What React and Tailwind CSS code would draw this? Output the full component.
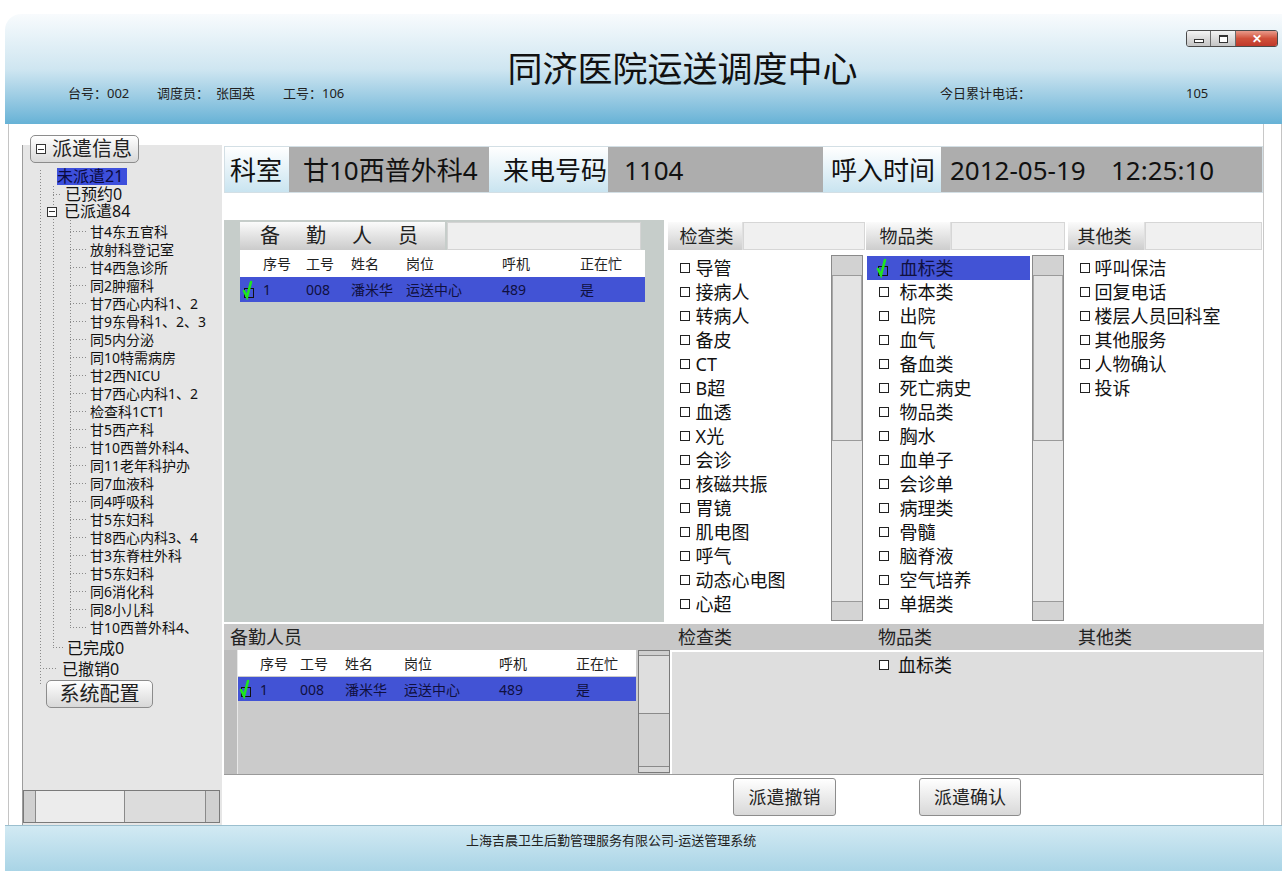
import React from "react";

const font = "font-['Noto_Sans','Noto_Sans_CJK_SC',sans-serif]";

const children = [
  "甘4东五官科", "放射科登记室", "甘4西急诊所", "同2肿瘤科", "甘7西心内科1、2", "甘9东骨科1、2、3",
  "同5内分泌", "同10特需病房", "甘2西NICU", "甘7西心内科1、2", "检查科1CT1", "甘5西产科",
  "甘10西普外科4、", "同11老年科护办", "同7血液科", "同4呼吸科", "甘5东妇科", "甘8西心内科3、4",
  "甘3东脊柱外科", "甘5东妇科", "同6消化科", "同8小儿科", "甘10西普外科4、",
];

const checks = ["导管", "接病人", "转病人", "备皮", "CT", "B超", "血透", "X光", "会诊", "核磁共振", "胃镜", "肌电图", "呼气", "动态心电图", "心超"];
const goods = ["血标类", "标本类", "出院", "血气", "备血类", "死亡病史", "物品类", "胸水", "血单子", "会诊单", "病理类", "骨髓", "脑脊液", "空气培养", "单据类"];
const others = ["呼叫保洁", "回复电话", "楼层人员回科室", "其他服务", "人物确认", "投诉"];

const cols = [
  { w: "w-[23px]" }, { w: "w-[43px]" }, { w: "w-[45px]" }, { w: "w-[55px]" }, { w: "w-[96px]" }, { w: "w-[78px]" },
];

function Box() {
  return <span className="inline-block w-[10px] h-[10px] border border-[#222] bg-white shrink-0" />;
}

function Ticked() {
  return (
    <svg width="16" height="20" viewBox="0 0 16 20" className="shrink-0">
      <rect x="2.5" y="8.5" width="9" height="9" fill="none" stroke="#111" />
      <path d="M2 11 L5 17 L9 2" stroke="#1ee61e" strokeWidth="2.6" fill="none" strokeLinecap="round" />
    </svg>
  );
}

function VScroll({ h, thumbTop, thumbH }) {
  return (
    <div className={`flex flex-col w-[32px] ${h} border border-[#8a8a8a] bg-[#e6e6e6] shrink-0`}>
      <div className={`${thumbTop} bg-[#d2d2d2] border-b border-[#9a9a9a]`} />
      <div className={`${thumbH} bg-[#e4e4e4] border-b border-[#9a9a9a] border-x border-x-[#a8a8a8]`} />
      <div className="flex-1" />
      <div className="h-[19px] bg-[#d4d4d4] border-t border-[#9a9a9a]" />
    </div>
  );
}

const head = ["序号", "工号", "姓名", "岗位", "呼机", "正在忙"];
const row = ["1", "008", "潘米华", "运送中心", "489", "是"];

function StaffTable({ gap }) {
  return (
    <div>
      <div className="flex items-center h-[27px] bg-white text-[14px] text-[#222]">
        <span className={`${gap} shrink-0`} />
        {head.map((t, i) => (
          <span key={i} className={`${cols[i + 1] ? cols[i + 1].w : ""} shrink-0`}>{t}</span>
        ))}
      </div>
      <div className="flex items-center h-[25px] bg-[#4253d5] text-[14px] text-[#101040]">
        <span className={`${gap} shrink-0 flex pl-[2px]`}><Ticked /></span>
        {row.map((t, i) => (
          <span key={i} className={`${cols[i + 1] ? cols[i + 1].w : ""} shrink-0`}>{t}</span>
        ))}
      </div>
    </div>
  );
}

function Btn({ children, cls }) {
  return (
    <div className={`flex items-center justify-center border border-[#8c8c8c] rounded-[3px] bg-linear-to-b from-white to-[#d8d8d8] text-[#222] ${cls}`}>
      {children}
    </div>
  );
}

function ColHead({ label, lw, iw, pl }) {
  return (
    <div className="flex h-[28px]">
      <div className={`${lw} ${pl} flex items-center bg-linear-to-b from-[#fbfbfb] to-[#cdcdcd] text-[18px] text-[#222] border-r border-[#e0e0e0] whitespace-nowrap`}>{label}</div>
      <div className={`${iw} bg-[#f0f0f0] border border-[#d6d6d6]`} />
    </div>
  );
}

export default function App() {
  return (
    <div className={`w-[1285px] h-[871px] bg-white flex flex-col overflow-hidden ${font}`}>
      {/* header */}
      <div className="relative mt-[14px] ml-[5px] mr-[3px] h-[110px] rounded-tl-[16px] bg-linear-to-b from-[#f8fbfd] via-[#cfe6f1] to-[#66b2d6] flex flex-col">
        <div className="mt-[37px] pl-[78px] text-center text-[35px] leading-[36px] text-[#111]">同济医院运送调度中心</div>
        <div className="flex mt-[-1px] pl-[63px] text-[13px] leading-[14px] text-[#222] whitespace-nowrap">
          <span className="w-[89px]">台号：002</span>
          <span className="w-[59px]">调度员：</span>
          <span className="w-[67px]">张国英</span>
          <span className="w-[657px]">工号：106</span>
          <span className="w-[246px]">今日累计电话：</span>
          <span>105</span>
        </div>
        <div className="absolute top-[16px] right-[4px] flex h-[17px] border border-[#4a4a4a] rounded-[3px] overflow-hidden">
          <div className="w-[24px] flex items-center justify-center bg-linear-to-b from-[#f4f4f4] to-[#c4c4c4] border-r border-[#6a6a6a]">
            <span className="w-[10px] h-[4px] mt-[4px] border border-[#333] bg-white" />
          </div>
          <div className="w-[25px] flex items-center justify-center bg-linear-to-b from-[#f4f4f4] to-[#c4c4c4] border-r border-[#6a6a6a]">
            <span className="w-[9px] h-[8px] border border-[#333] border-t-2 bg-white" />
          </div>
          <div className="w-[41px] flex items-center justify-center bg-linear-to-b from-[#e99a8a] via-[#d0503a] to-[#c0392b] text-white text-[12px] font-bold leading-none">
            ✕
          </div>
        </div>
      </div>

      {/* body */}
      <div className="flex h-[701px] ml-[8px] mr-[3px] border-l border-r border-[#c4c4c4]">
        {/* left panel */}
        <div className="ml-[13px] w-[200px] mt-[21px] bg-[#e6e6e6] border-l border-[#9c9c9c] flex flex-col relative">
          <svg className="absolute left-0 top-0" width="200" height="680" viewBox="23 145 200 680">
            <g stroke="#8a8a8a" strokeDasharray="1 2" strokeWidth="1">
              <line x1="40.5" y1="170" x2="40.5" y2="684" />
              <line x1="53.5" y1="186" x2="53.5" y2="647" />
              <line x1="70.5" y1="220" x2="70.5" y2="628" />
              <line x1="53" y1="194.5" x2="62" y2="194.5" />
              <line x1="53" y1="647.5" x2="64" y2="647.5" />
              <line x1="40" y1="668.5" x2="58" y2="668.5" />
              {children.map((_, i) => (
                <line key={i} x1="70" y1={231.5 + i * 18} x2="88" y2={231.5 + i * 18} />
              ))}
            </g>
          </svg>
          <Btn cls="relative mt-[-10px] ml-[7px] w-[109px] h-[28px] !justify-start pl-[5px] text-[20px] leading-[24px] rounded-[5px]">
            <span className="w-[10px] h-[10px] border border-[#333] flex items-center justify-center mr-[6px] bg-white">
              <span className="w-[6px] h-[1px] bg-[#333]" />
            </span>
            派遣信息
          </Btn>
          <div className="relative flex flex-col text-[#111]">
            <div className="mt-[5px] ml-[34px] w-[70px] h-[17px] bg-[#3d4fdc] text-[16px] leading-[17px] text-[#0a0a40]">未派遣21</div>
            <div className="ml-[42px] h-[17px] mt-[1px] text-[16px] leading-[17px]">已预约0</div>
            <div className="flex items-center ml-[24px] h-[17px] text-[16px] leading-[17px]">
              <span className="w-[10px] h-[10px] border border-[#333] flex items-center justify-center mr-[7px] bg-white">
                <span className="w-[6px] h-[1px] bg-[#333]" />
              </span>
              已派遣84
            </div>
            <div className="mt-[3px] flex flex-col">
              {children.map((c, i) => (
                <div key={i} className="ml-[67px] h-[18px] text-[14px] leading-[18px] whitespace-nowrap">{c}</div>
              ))}
            </div>
            <div className="ml-[44px] mt-[3px] h-[17px] text-[16px] leading-[17px]">已完成0</div>
            <div className="ml-[39px] mt-[4px] h-[17px] text-[16px] leading-[17px]">已撤销0</div>
            <Btn cls="relative mt-[2px] ml-[23px] w-[107px] h-[28px] text-[20px] leading-[24px] rounded-[5px]">系统配置</Btn>
          </div>
          <div className="mt-auto mb-[2px] mr-[2px] h-[33px] flex border border-[#7a7a7a] bg-[#dcdcdc]">
            <div className="w-[12px] bg-[#d0d0d0] border-r border-[#8a8a8a]" />
            <div className="w-[89px] bg-[#ececec] border-r border-[#8a8a8a]" />
            <div className="flex-1" />
            <div className="w-[14px] bg-[#d0d0d0] border-l border-[#8a8a8a]" />
          </div>
        </div>

        {/* main */}
        <div className="ml-[2px] w-[1040px] flex flex-col border-r border-[#c8c8c8]">
          {/* info bar */}
          <div className="mt-[22px] h-[47px] flex border border-[#d3dfe5] text-[26px] leading-[30px] text-[#111] whitespace-nowrap">
            <div className="w-[64px] pl-[5px] flex items-center bg-linear-to-b from-white to-[#c9e4f0]">科室</div>
            <div className="w-[200px] pl-[14px] flex items-center bg-[#adadad]">甘10西普外科4</div>
            <div className="w-[119px] pl-[14px] flex items-center bg-linear-to-b from-white to-[#c9e4f0]">来电号码</div>
            <div className="w-[215px] pl-[16px] flex items-center bg-[#adadad]">1104</div>
            <div className="w-[118px] pl-[8px] flex items-center bg-linear-to-b from-white to-[#c9e4f0]">呼入时间</div>
            <div className="flex-1 pl-[9px] flex items-center bg-[#adadad]">
              <span className="w-[161px]">2012-05-19</span>
              <span>12:25:10</span>
            </div>
          </div>

          {/* panels */}
          <div className="mt-[27px] h-[402px] flex">
            <div className="w-[440px] bg-[#c6cdca] pl-[16px] pt-[2px] flex flex-col">
              <div className="flex h-[28px] w-[401px]">
                <div className="w-[205px] shrink-0 pl-[20px] flex items-center bg-linear-to-b from-[#fbfbfb] to-[#cbcbcb] text-[20px] tracking-[26px] text-[#222] whitespace-nowrap overflow-hidden">备勤人员</div>
                <div className="ml-[2px] flex-1 bg-[#efefef] border border-[#d4d4d4]" />
              </div>
              <div className="w-[405px]">
                <StaffTable gap="w-[23px]" />
              </div>
            </div>
            <div className="w-[600px] bg-white pt-[2px] flex">
              {/* col 1 */}
              <div className="w-[202px] flex flex-col">
                <div className="ml-[4px]"><ColHead label="检查类" lw="w-[75px]" iw="w-[122px]" pl="pl-[12px]" /></div>
                <div className="flex">
                  <div className="w-[167px] pt-[6px] pl-[16px] flex flex-col">
                    {checks.map((c) => (
                      <div key={c} className="h-[24px] flex items-center gap-[6px] text-[18px] leading-[24px] text-[#111] whitespace-nowrap"><Box />{c}</div>
                    ))}
                  </div>
                  <div className="mt-[5px]"><VScroll h="h-[366px]" thumbTop="h-[20px]" thumbH="h-[165px]" /></div>
                </div>
              </div>
              {/* col 2 */}
              <div className="w-[200px] flex flex-col">
                <ColHead label="物品类" lw="w-[85px]" iw="w-[114px]" pl="pl-[14px]" />
                <div className="flex">
                  <div className="ml-[1px] w-[163px] pt-[6px] flex flex-col">
                    {goods.map((c, i) => (
                      <div key={i} className={`h-[24px] flex items-center text-[18px] leading-[24px] text-[#111] whitespace-nowrap ${i === 0 ? "bg-[#4253d5] pl-[9px] gap-[8px] text-[#101040]" : "pl-[12px] gap-[11px]"}`}>
                        {i === 0 ? <Ticked /> : <Box />}
                        {c}
                      </div>
                    ))}
                  </div>
                  <div className="ml-[2px] mt-[5px]"><VScroll h="h-[366px]" thumbTop="h-[20px]" thumbH="h-[165px]" /></div>
                </div>
              </div>
              {/* col 3 */}
              <div className="flex-1 flex flex-col">
                <div className="ml-[2px]"><ColHead label="其他类" lw="w-[77px]" iw="w-[117px]" pl="pl-[10px]" /></div>
                <div className="pt-[6px] pl-[14px] flex flex-col">
                  {others.map((c) => (
                    <div key={c} className="h-[24px] flex items-center gap-[5px] text-[18px] leading-[24px] text-[#111] whitespace-nowrap"><Box />{c}</div>
                  ))}
                </div>
              </div>
            </div>
          </div>

          {/* bottom header */}
          <div className="mt-[2px] h-[26px] flex items-center bg-[#c8c8c8] text-[18px] leading-[24px] text-[#222]">
            <span className="w-[454px] pl-[6px]">备勤人员</span>
            <span className="w-[200px]">检查类</span>
            <span className="w-[200px]">物品类</span>
            <span>其他类</span>
          </div>

          {/* bottom content */}
          <div className="h-[125px] flex border-b border-[#9a9a9a]">
            <div className="w-[446px] flex bg-[#cbcbcb]">
              <div className="w-[14px] bg-[#bdbdbd] border-r border-[#e8e8e8]" />
              <div className="w-[398px] flex flex-col">
                <div className="flex items-center h-[26px] bg-white text-[14px] text-[#222]">
                  <span className="w-[22px] shrink-0" />
                  {head.map((t, i) => (
                    <span key={i} className={`${["w-[40px]", "w-[45px]", "w-[59px]", "w-[95px]", "w-[77px]", ""][i]} shrink-0`}>{t}</span>
                  ))}
                </div>
                <div className="flex items-center h-[24px] bg-[#4253d5] text-[14px] text-[#101040] mt-[1px]">
                  <span className="w-[22px] shrink-0 flex pl-[1px]"><Ticked /></span>
                  {row.map((t, i) => (
                    <span key={i} className={`${["w-[40px]", "w-[45px]", "w-[59px]", "w-[95px]", "w-[77px]", ""][i]} shrink-0`}>{t}</span>
                  ))}
                </div>
              </div>
              <div className="ml-[2px] flex flex-col w-[32px] h-[123px] border border-[#7a7a7a] bg-[#d4d4d4]">
                <div className="h-[5px] bg-[#cfcfcf] border-b border-[#8a8a8a]" />
                <div className="h-[58px] bg-[#dedede] border-b border-[#8a8a8a]" />
                <div className="flex-1" />
                <div className="h-[6px] bg-[#d8d8d8] border-t border-[#8a8a8a]" />
              </div>
            </div>
            <div className="flex-1 bg-[#dedede] border-l-2 border-t-2 border-white pl-[207px] pt-[1px]">
              <div className="h-[24px] flex items-center gap-[9px] text-[18px] leading-[24px] text-[#111]"><Box />血标类</div>
            </div>
          </div>

          {/* buttons */}
          <div className="flex-1 flex pl-[509px] pt-[3px] gap-[83px]">
            <Btn cls="w-[103px] h-[38px] text-[18px]">派遣撤销</Btn>
            <Btn cls="w-[102px] h-[38px] text-[18px]">派遣确认</Btn>
          </div>
        </div>
      </div>

      {/* footer */}
      <div className="ml-[5px] mr-[3px] h-[46px] border-t border-[#9bbfcf] bg-linear-to-b from-[#d2eaf3] to-[#a9d4e6] pl-[461px] pt-[6px] text-[13px] leading-[16px] text-[#222]">
        上海吉晨卫生后勤管理服务有限公司-运送管理系统
      </div>
    </div>
  );
}
